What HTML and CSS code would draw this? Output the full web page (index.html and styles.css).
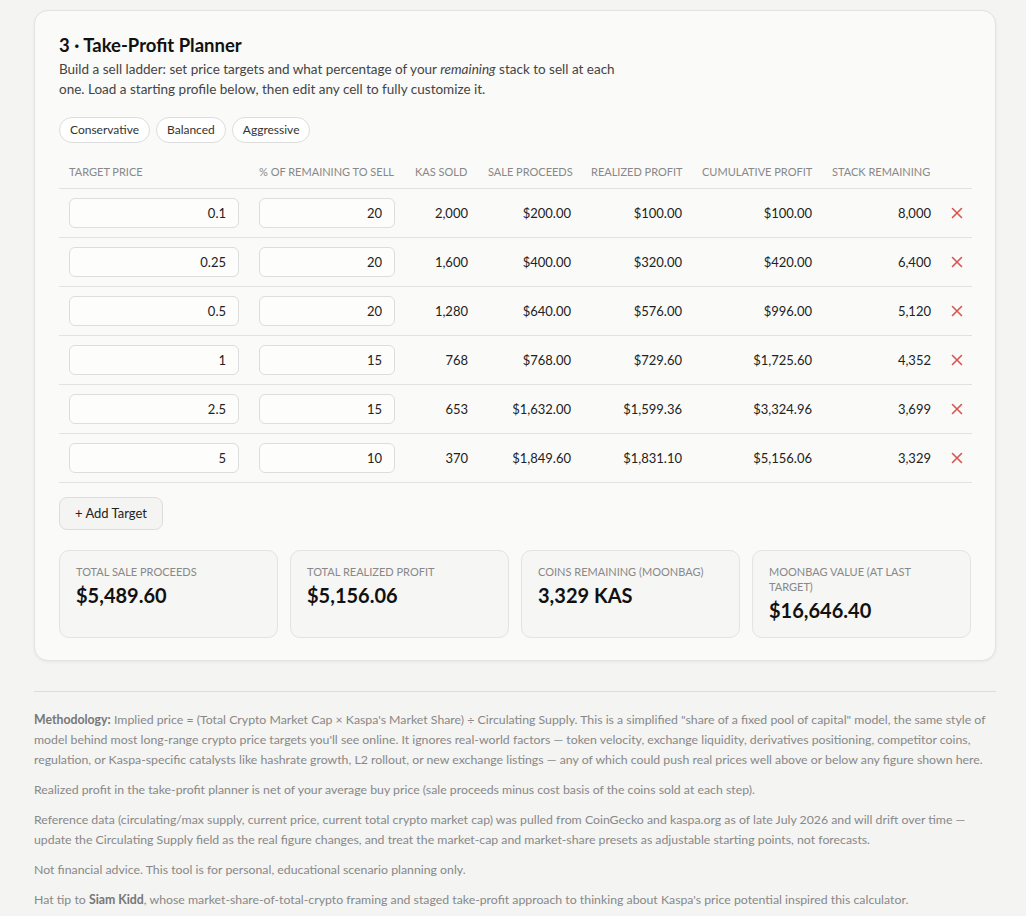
FILE: index.html
```html
<!DOCTYPE html>
<html lang="en">
<head>
    <meta charset="UTF-8">
    <meta name="viewport" content="width=device-width, initial-scale=1.0">
    <title>Kaspa Price Calculator</title>
    <link rel="stylesheet" href="styles.css">
</head>
<body>

<section class="card">
    <h2>3 · Take-Profit Planner</h2>
    <p class="desc">Build a sell ladder: set price targets and what percentage of your <em>remaining</em> stack to sell at each one. Load a starting profile below, then edit any cell to fully customize it.</p>

    <div class="presets">
        <button class="chip" onclick="loadProfile('conservative')">Conservative</button>
        <button class="chip" onclick="loadProfile('balanced')">Balanced</button>
        <button class="chip" onclick="loadProfile('aggressive')">Aggressive</button>
    </div>

    <table class="ladder">
        <colgroup>
            <col class="c-price">
            <col class="c-pct">
            <col class="c-sold">
            <col class="c-proceeds">
            <col class="c-profit">
            <col class="c-cum">
            <col class="c-stack">
            <col class="c-del">
        </colgroup>
        <thead>
            <tr>
                <th>Target Price</th>
                <th>% of Remaining to Sell</th>
                <th>KAS Sold</th>
                <th>Sale Proceeds</th>
                <th>Realized Profit</th>
                <th>Cumulative Profit</th>
                <th>Stack Remaining</th>
                <th></th>
            </tr>
        </thead>
        <tbody id="ladderRows">
            <!-- rows are rendered by renderLadder() -->
        </tbody>
    </table>

    <button class="add-btn" onclick="addTarget()">+ Add Target</button>

    <div class="stats">
        <div class="stat">
            <div class="stat-label">Total Sale Proceeds</div>
            <div class="stat-value" id="totProceeds">$0.00</div>
        </div>
        <div class="stat">
            <div class="stat-label">Total Realized Profit</div>
            <div class="stat-value" id="totProfit">$0.00</div>
        </div>
        <div class="stat">
            <div class="stat-label">Coins Remaining (Moonbag)</div>
            <div class="stat-value" id="moonCoins">0 KAS</div>
        </div>
        <div class="stat">
            <div class="stat-label">Moonbag Value (at last target)</div>
            <div class="stat-value" id="moonValue">$0.00</div>
        </div>
    </div>
</section>

<footer class="notes">
    <p><strong>Methodology:</strong> Implied price = (Total Crypto Market Cap × Kaspa's Market Share) ÷ Circulating Supply. This is a simplified "share of a fixed pool of capital" model, the same style of model behind most long-range crypto price targets you'll see online. It ignores real-world factors — token velocity, exchange liquidity, derivatives positioning, competitor coins, regulation, or Kaspa-specific catalysts like hashrate growth, L2 rollout, or new exchange listings — any of which could push real prices well above or below any figure shown here.</p>
    <p>Realized profit in the take-profit planner is net of your average buy price (sale proceeds minus cost basis of the coins sold at each step).</p>
    <p>Reference data (circulating/max supply, current price, current total crypto market cap) was pulled from CoinGecko and kaspa.org as of late July 2026 and will drift over time — update the Circulating Supply field as the real figure changes, and treat the market-cap and market-share presets as adjustable starting points, not forecasts.</p>
    <p>Not financial advice. This tool is for personal, educational scenario planning only.</p>
    <p>Hat tip to <strong>Siam Kidd</strong>, whose market-share-of-total-crypto framing and staged take-profit approach to thinking about Kaspa's price potential inspired this calculator.</p>
</footer>

<script>
    // Holdings from section 1
    let holdings = 10000;
    let avgBuy = 0.05;

    const profiles = {
        conservative: [[0.1, 20], [0.25, 20], [0.5, 20], [1, 15], [2.5, 15], [5, 10]],
        balanced: [[0.15, 15], [0.3, 15], [0.6, 15], [1.2, 15], [3, 15], [6, 10]],
        aggressive: [[0.25, 10], [0.5, 10], [1, 10], [2.5, 10], [5, 10], [10, 10]]
    };

    let ladder = profiles.conservative.map(r => ({ price: r[0], pct: r[1] }));

    const usd = n => '$' + n.toLocaleString('en-US', { minimumFractionDigits: 2, maximumFractionDigits: 2 });
    const kas = n => Math.round(n).toLocaleString('en-US');

    const xIcon = '<svg width="12" height="12" viewBox="0 0 12 12"><path d="M1.5 1.5l9 9M10.5 1.5l-9 9" stroke="#d9534f" stroke-width="1.6" stroke-linecap="round"/></svg>';

    function renderLadder() {
        let body = document.getElementById('ladderRows');
        body.innerHTML = '';
        let stack = holdings;
        let totProceeds = 0;
        let totProfit = 0;
        let lastPrice = 0;

        ladder.forEach((step, i) => {
            let sold = stack * step.pct / 100;
            let proceeds = sold * step.price;
            let profit = proceeds - sold * avgBuy;
            stack -= sold;
            totProceeds += proceeds;
            totProfit += profit;
            lastPrice = step.price;

            let row = document.createElement('tr');
            row.innerHTML = `
                <td><input class="cell-input" type="text" value="${step.price}" onchange="updateStep(${i}, 'price', this.value)"></td>
                <td><input class="cell-input" type="text" value="${step.pct}" onchange="updateStep(${i}, 'pct', this.value)"></td>
                <td class="num">${kas(sold)}</td>
                <td class="num">${usd(proceeds)}</td>
                <td class="num">${usd(profit)}</td>
                <td class="num">${usd(totProfit)}</td>
                <td class="num">${kas(stack)}</td>
                <td class="del"><button class="del-btn" onclick="removeStep(${i})">${xIcon}</button></td>
            `;
            body.appendChild(row);
        });

        document.getElementById('totProceeds').innerText = usd(totProceeds);
        document.getElementById('totProfit').innerText = usd(totProfit);
        document.getElementById('moonCoins').innerText = kas(stack) + ' KAS';
        document.getElementById('moonValue').innerText = usd(stack * lastPrice);
    }

    function updateStep(i, key, value) {
        ladder[i][key] = parseFloat(value) || 0;
        renderLadder();
    }

    function removeStep(i) {
        ladder.splice(i, 1);
        renderLadder();
    }

    function addTarget() {
        let last = ladder[ladder.length - 1];
        ladder.push({ price: last ? last.price * 2 : 1, pct: 10 });
        renderLadder();
    }

    function loadProfile(name) {
        ladder = profiles[name].map(r => ({ price: r[0], pct: r[1] }));
        renderLadder();
    }

    renderLadder();
</script>

</body>
</html>
```

FILE: styles.css
```css
body {
    margin: 0;
    padding: 10px 30px 30px 34px;
    background-color: #f4f4f2;
    font-family: Lato, "Segoe UI", sans-serif;
    color: #1a1a1a;
}
.card {
    background-color: #fafaf9;
    border: 1px solid #e3e3e1;
    border-radius: 14px;
    padding: 23px 24px 22px;
    box-shadow: 0 1px 3px rgba(0, 0, 0, 0.06);
}
h2 {
    font-size: 18.5px;
    line-height: 22px;
    margin: 0 0 3px;
    color: #111;
}
.desc {
    font-size: 13.5px;
    line-height: 20px;
    color: #444;
    max-width: 580px;
    margin: 0 0 18px;
}
.presets {
    display: flex;
    gap: 6px;
    margin-bottom: 13px;
}
.chip {
    font: inherit;
    font-size: 12px;
    line-height: 14px;
    padding: 5px 10px;
    color: #333;
    background-color: #fff;
    border: 1px solid #ddd;
    border-radius: 999px;
    cursor: pointer;
}
.ladder {
    width: 100%;
    border-collapse: collapse;
    table-layout: fixed;
}
.c-price { width: 190px; }
.c-pct { width: 156px; }
.c-sold { width: 73px; }
.c-proceeds { width: 103px; }
.c-profit { width: 111px; }
.c-cum { width: 130px; }
.c-stack { width: 119px; }
.c-del { width: 31px; }
th {
    padding: 9px 10px;
    font-size: 11px;
    line-height: 14px;
    font-weight: 400;
    text-transform: uppercase;
    color: #888;
    text-align: left;
    white-space: nowrap;
    border-bottom: 1px solid #e2e2e0;
}
td {
    padding: 9px 10px;
    font-size: 13px;
    color: #222;
    border-bottom: 1px solid #e2e2e0;
}
td.num {
    text-align: right;
}
.cell-input {
    box-sizing: border-box;
    width: 100%;
    height: 30px;
    padding: 0 12px;
    font: inherit;
    font-size: 13px;
    color: #222;
    text-align: right;
    background-color: #fdfdfc;
    border: 1px solid #ddd;
    border-radius: 6px;
}
td.del {
    padding: 0;
    text-align: center;
}
.del-btn {
    background: none;
    border: none;
    padding: 2px;
    cursor: pointer;
    line-height: 0;
}
.add-btn {
    display: block;
    margin-top: 14px;
    font: inherit;
    font-size: 13px;
    line-height: 15px;
    padding: 8px 15px;
    color: #222;
    background-color: #f4f4f3;
    border: 1px solid #ddd;
    border-radius: 8px;
    cursor: pointer;
}
.stats {
    display: grid;
    grid-template-columns: repeat(4, 1fr);
    gap: 12px;
    margin-top: 20px;
}
.stat {
    background-color: #f6f6f5;
    border: 1px solid #e3e3e1;
    border-radius: 10px;
    padding: 13px 16px 15px;
}
.stat-label {
    font-size: 11px;
    line-height: 15px;
    text-transform: uppercase;
    color: #888;
}
.stat-value {
    margin-top: 4px;
    font-size: 20px;
    line-height: 24px;
    font-weight: 700;
    color: #111;
}
.notes {
    margin-top: 30px;
    border-top: 1px solid #ddd;
    padding-top: 18px;
    font-size: 12.3px;
    line-height: 20px;
    color: #888;
}
.notes p {
    margin: 0 0 10px;
}
.notes strong {
    color: #777;
}
```
